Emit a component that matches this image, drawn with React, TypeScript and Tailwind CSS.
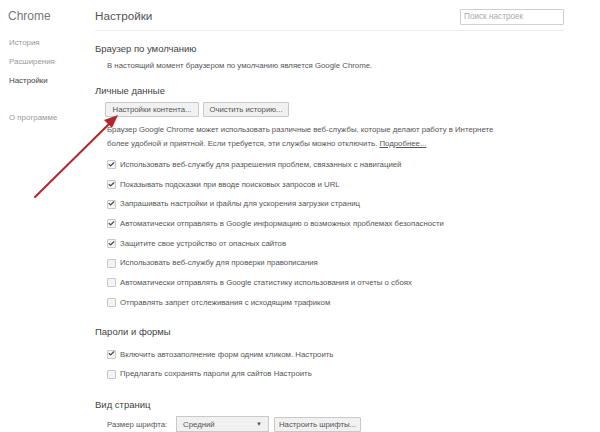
import { Check } from "lucide-react";

const privacyItems = [
  { label: "Использовать веб-службу для разрешения проблем, связанных с навигацией", checked: true },
  { label: "Показывать подсказки при вводе поисковых запросов и URL", checked: true },
  { label: "Запрашивать настройки и файлы для ускорения загрузки страниц", checked: true },
  { label: "Автоматически отправлять в Google информацию о возможных проблемах безопасности", checked: true },
  { label: "Защитите свое устройство от опасных сайтов", checked: true },
  { label: "Использовать веб-службу для проверки правописания", checked: false },
  { label: "Автоматически отправлять в Google статистику использования и отчеты о сбоях", checked: false },
  { label: "Отправлять запрет отслеживания с исходящим трафиком", checked: false },
];

const formItems = [
  { label: "Включить автозаполнение форм одним кликом. Настроить", checked: true },
  { label: "Предлагать сохранять пароли для сайтов Настроить", checked: false },
];

function CheckRow({ label, checked }: { label: string; checked: boolean }) {
  return (
    <div className="flex items-center gap-[4px] h-[19.7px]">
      <span className="w-[9px] h-[9px] border border-[#c8c8c8] bg-[#f4f4f4] rounded-[1px] flex items-center justify-center">
        {checked && <Check size={9} strokeWidth={4} className="text-[#444] -mt-[1px]" />}
      </span>
      <span className="text-[7.8px] text-[#555] whitespace-nowrap">{label}</span>
    </div>
  );
}

function Btn({ children, w }: { children: React.ReactNode; w: string }) {
  return (
    <button className={`${w} h-[15px] border border-[#c9c9c9] bg-[#f1f1f1] text-[7.8px] text-[#555] rounded-[1px] flex items-center justify-center whitespace-nowrap`}>
      {children}
    </button>
  );
}

export default function App() {
  return (
    <div
      className="relative w-[600px] h-[432px] overflow-hidden bg-white flex"
      style={{ fontFamily: '"Liberation Sans", Arial, sans-serif' }}
    >
      {/* sidebar */}
      <div className="w-[95px] pl-[8px] shrink-0">
        <div className="h-[20px] mt-[6px] flex items-center text-[12px] text-[#777]">Chrome</div>
        <div className="mt-[7.5px] pl-[1px] flex flex-col text-[7.9px] text-[#999]">
          <span className="h-[19px] flex items-center">История</span>
          <span className="h-[19px] flex items-center">Расширения</span>
          <span className="h-[19px] flex items-center text-[#444]">Настройки</span>
          <span className="h-[19px] flex items-center mt-[18px]">О программе</span>
        </div>
      </div>

      {/* main */}
      <div className="flex-1 pr-[36px]">
        <div className="h-[31px] border-b border-[#ececec] flex items-start justify-between">
          <span className="h-[20px] mt-[6px] flex items-center text-[11.7px] text-[#555]">Настройки</span>
          <div className="mt-[9px] w-[104px] h-[16px] border border-[#cfcfcf] rounded-[1px] text-[8.2px] text-[#aaa] pl-[3px] flex items-center">
            Поиск настроек
          </div>
        </div>

        <div className="h-[14px] mt-[11px] flex items-center text-[9.5px] text-[#444]">Браузер по умолчанию</div>
        <div className="h-[12px] mt-[4px] ml-[12px] flex items-center text-[7.8px] text-[#555]">
          В настоящий момент браузером по умолчанию является Google Chrome.
        </div>

        <div className="h-[14px] mt-[12px] flex items-center text-[9.5px] text-[#444]">Личные данные</div>
        <div className="flex gap-[4px] ml-[10px] mt-[4px]">
          <Btn w="w-[94px]">Настройки контента...</Btn>
          <Btn w="w-[86px]">Очистить историю...</Btn>
        </div>

        <div className="ml-[12px] mt-[6px] text-[7.8px] text-[#555] leading-[14px] whitespace-nowrap">
          Браузер Google Chrome может использовать различные веб-службы, которые делают работу в Интернете
          <br />
          более удобной и приятной. Если требуется, эти службы можно отключить.{" "}
          <span className="underline">Подробнее...</span>
        </div>

        <div className="ml-[12px] mt-[4px] flex flex-col">
          {privacyItems.map((it) => (
            <CheckRow key={it.label} {...it} />
          ))}
        </div>

        <div className="h-[14px] mt-[13px] flex items-center text-[9.5px] text-[#444]">Пароли и формы</div>
        <div className="ml-[12px] mt-[5px] flex flex-col">
          {formItems.map((it) => (
            <CheckRow key={it.label} {...it} />
          ))}
        </div>

        <div className="h-[14px] mt-[14.5px] flex items-center text-[9.5px] text-[#444]">Вид страниц</div>
        <div className="ml-[12px] mt-[4px] flex items-center">
          <span className="text-[7.8px] text-[#555] w-[69px] whitespace-nowrap">Размер шрифта:</span>
          <div className="w-[93px] h-[16px] border border-[#c9c9c9] bg-[#f1f1f1] text-[7.8px] text-[#555] flex items-center justify-between px-[6px]">
            <span>Средний</span>
            <span className="text-[6px] text-[#555]">▼</span>
          </div>
          <div className="ml-[5px]">
            <Btn w="w-[87px]">Настроить шрифты...</Btn>
          </div>
        </div>
      </div>

      {/* red annotation arrow */}
      <svg className="absolute left-0 top-0 pointer-events-none" width="600" height="432">
        <line x1="35" y1="197" x2="110" y2="123" stroke="#b3262c" strokeWidth="2" strokeLinecap="round" />
        <polygon points="118,115 104,120 112,128" fill="#b3262c" />
      </svg>
    </div>
  );
}
